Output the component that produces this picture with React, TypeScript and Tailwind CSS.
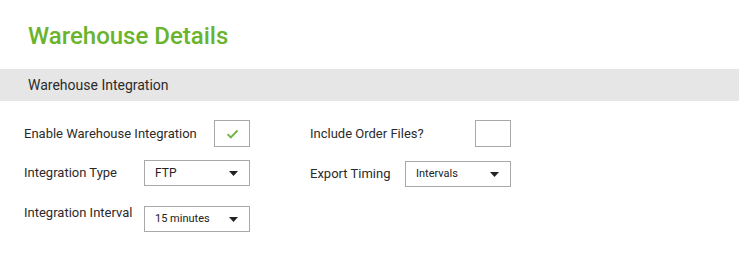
import React from 'react';

function Caret() {
  return (
    <svg width="9" height="5" viewBox="0 0 9 5" className="shrink-0">
      <path d="M0 0h9L4.5 5z" fill="#222" />
    </svg>
  );
}

function Select({ value, width, small }: { value: string; width: string; small?: boolean }) {
  return (
    <div className={`flex h-[26px] items-center justify-between border border-[#a9a9a9] bg-white pl-[10px] pr-[11px] ${width}`}>
      <span className={small ? 'text-[11px] text-[#222]' : 'text-[12px] text-[#222]'}>{value}</span>
      <Caret />
    </div>
  );
}

function Check({ checked }: { checked?: boolean }) {
  return (
    <div className="flex h-[27px] w-[36px] items-center justify-center border border-[#a9a9a9] bg-white">
      {checked && (
        <svg width="13" height="10" viewBox="0 0 13 10">
          <path d="M1.5 5.2 4.8 8.4 11.5 1.5" fill="none" stroke="#6db33f" strokeWidth="1.8" />
        </svg>
      )}
    </div>
  );
}

export default function App() {
  return (
    <div className="h-[272px] w-[739px] bg-white font-['Roboto',sans-serif] text-[#2b2b2b]">
      <h1 className="px-[28px] pt-[20px] text-[24px] font-medium leading-[32px] text-[#6ab42d]">
        Warehouse Details
      </h1>
      <div className="mt-[17px] flex h-[32px] items-center bg-[#e6e6e6] px-[28px] text-[14px]">
        Warehouse Integration
      </div>
      <div className="flex pl-[24px] pt-[19px]">
        <div className="flex w-[286px] flex-col">
          <div className="flex h-[27px] items-center">
            <span className="w-[190px] text-[13px]">Enable Warehouse Integration</span>
            <Check checked />
          </div>
          <div className="mt-[13px] flex h-[26px] items-center">
            <span className="w-[120px] text-[13px]">Integration Type</span>
            <Select value="FTP" width="w-[106px]" />
          </div>
          <div className="mt-[20px] flex items-start">
            <span className="w-[120px] text-[13px] leading-[13px]">Integration Interval</span>
            <Select value="15 minutes" width="w-[106px]" small />
          </div>
        </div>
        <div className="flex flex-col">
          <div className="flex h-[27px] items-center">
            <span className="w-[165px] text-[13px]">Include Order Files?</span>
            <Check />
          </div>
          <div className="mt-[14px] flex h-[26px] items-center">
            <span className="w-[95px] text-[13px]">Export Timing</span>
            <Select value="Intervals" width="w-[106px]" small />
          </div>
        </div>
      </div>
    </div>
  );
}
